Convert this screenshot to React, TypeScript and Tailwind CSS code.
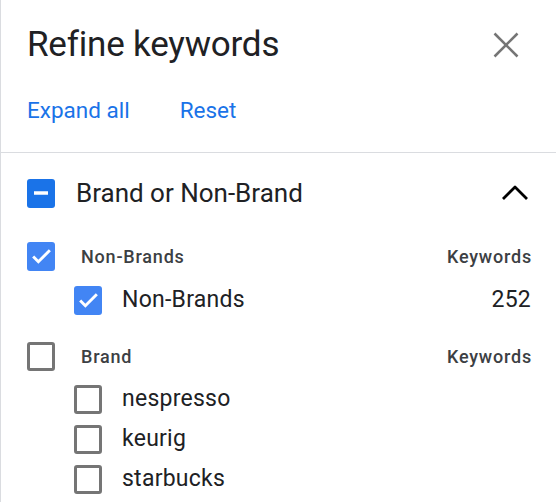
import { Check, ChevronUp, Minus, X } from "lucide-react";

type Option = { label: string; count?: number; checked: boolean };

type Group = { title: string; checked: boolean; options: Option[] };

const groups: Group[] = [
  {
    title: "Non-Brands",
    checked: true,
    options: [{ label: "Non-Brands", count: 252, checked: true }],
  },
  {
    title: "Brand",
    checked: false,
    options: [
      { label: "nespresso", checked: false },
      { label: "keurig", checked: false },
      { label: "starbucks", checked: false },
    ],
  },
];

function Checkbox({
  checked,
  indeterminate = false,
}: {
  checked: boolean;
  indeterminate?: boolean;
}) {
  if (indeterminate) {
    return (
      <span className="flex h-[29px] w-[28px] shrink-0 items-center justify-center rounded-[3px] bg-[#1a73e8]">
        <Minus className="h-6 w-6 text-white" strokeWidth={3.5} strokeLinecap="butt" />
      </span>
    );
  }
  if (checked) {
    return (
      <span className="flex h-[29px] w-[28px] shrink-0 items-center justify-center rounded-[3px] bg-[#4285f4]">
        <Check className="h-[25px] w-[25px] text-white" strokeWidth={2.8} strokeLinecap="butt" strokeLinejoin="miter" />
      </span>
    );
  }
  return (
    <span className="h-[29px] w-[28px] shrink-0 rounded-[3px] border-[3px] border-[#757575]" />
  );
}

export default function App() {
  return (
    <div className="flex h-[502px] w-[556px] flex-col overflow-hidden border-l border-[#dadce0] bg-white font-['Roboto',sans-serif] text-[#202124]">
      <header className="pl-[26px] pr-[25px]">
        <div className="flex h-[90px] items-center justify-between">
          <h1 className="text-[35px] font-normal tracking-[-0.2px] text-[#202124]">Refine keywords</h1>
          <X className="mr-[2px] h-[46px] w-[46px] text-[#757575]" strokeWidth={1.3} strokeLinecap="butt" />
        </div>
        <div className="flex h-[42px] items-center gap-[50px] text-[22.5px] text-[#1a73e8]">
          <button>Expand all</button>
          <button>Reset</button>
        </div>
      </header>
      <div className="mt-[20px] h-px bg-[#dadce0]" />

      <section className="pl-[26px] pr-[25px]">
        <div className="flex h-[80px] items-center">
          <Checkbox checked indeterminate />
          <h2 className="ml-[21px] flex-1 text-[26px] font-normal text-[#202124]">Brand or Non-Brand</h2>
          <ChevronUp className="-mr-[8px] h-[48px] w-[48px] text-black" strokeWidth={1.4} strokeLinecap="butt" />
        </div>

        {groups.map((group, gi) => (
          <div key={group.title} className={gi > 0 ? "mt-[15px]" : ""}>
            <div className={`flex items-center ${gi === 0 ? "h-[46px]" : "h-[40px]"}`}>
              <Checkbox checked={group.checked} />
              <span className="ml-[26px] flex-1 text-[18px] font-medium tracking-[0.8px] text-[#3c4043]">
                {group.title}
              </span>
              <span className="-mr-[1px] text-[18px] font-medium tracking-[0.8px] text-[#3c4043]">Keywords</span>
            </div>
            <div className={gi === 0 ? "" : "mt-[3px]"}>
              {group.options.map((opt) => (
                <div
                  key={opt.label}
                  className={`flex items-center pl-[47px] ${gi === 0 ? "h-[42px]" : "h-[40px]"}`}
                >
                  <Checkbox checked={opt.checked} />
                  <span className="ml-[20px] flex-1 text-[23px] tracking-[0.25px] text-[#202124]">{opt.label}</span>
                  {opt.count !== undefined && (
                    <span className="text-[23px] tracking-[0.25px] text-[#202124]">{opt.count}</span>
                  )}
                </div>
              ))}
            </div>
          </div>
        ))}
      </section>
    </div>
  );
}
